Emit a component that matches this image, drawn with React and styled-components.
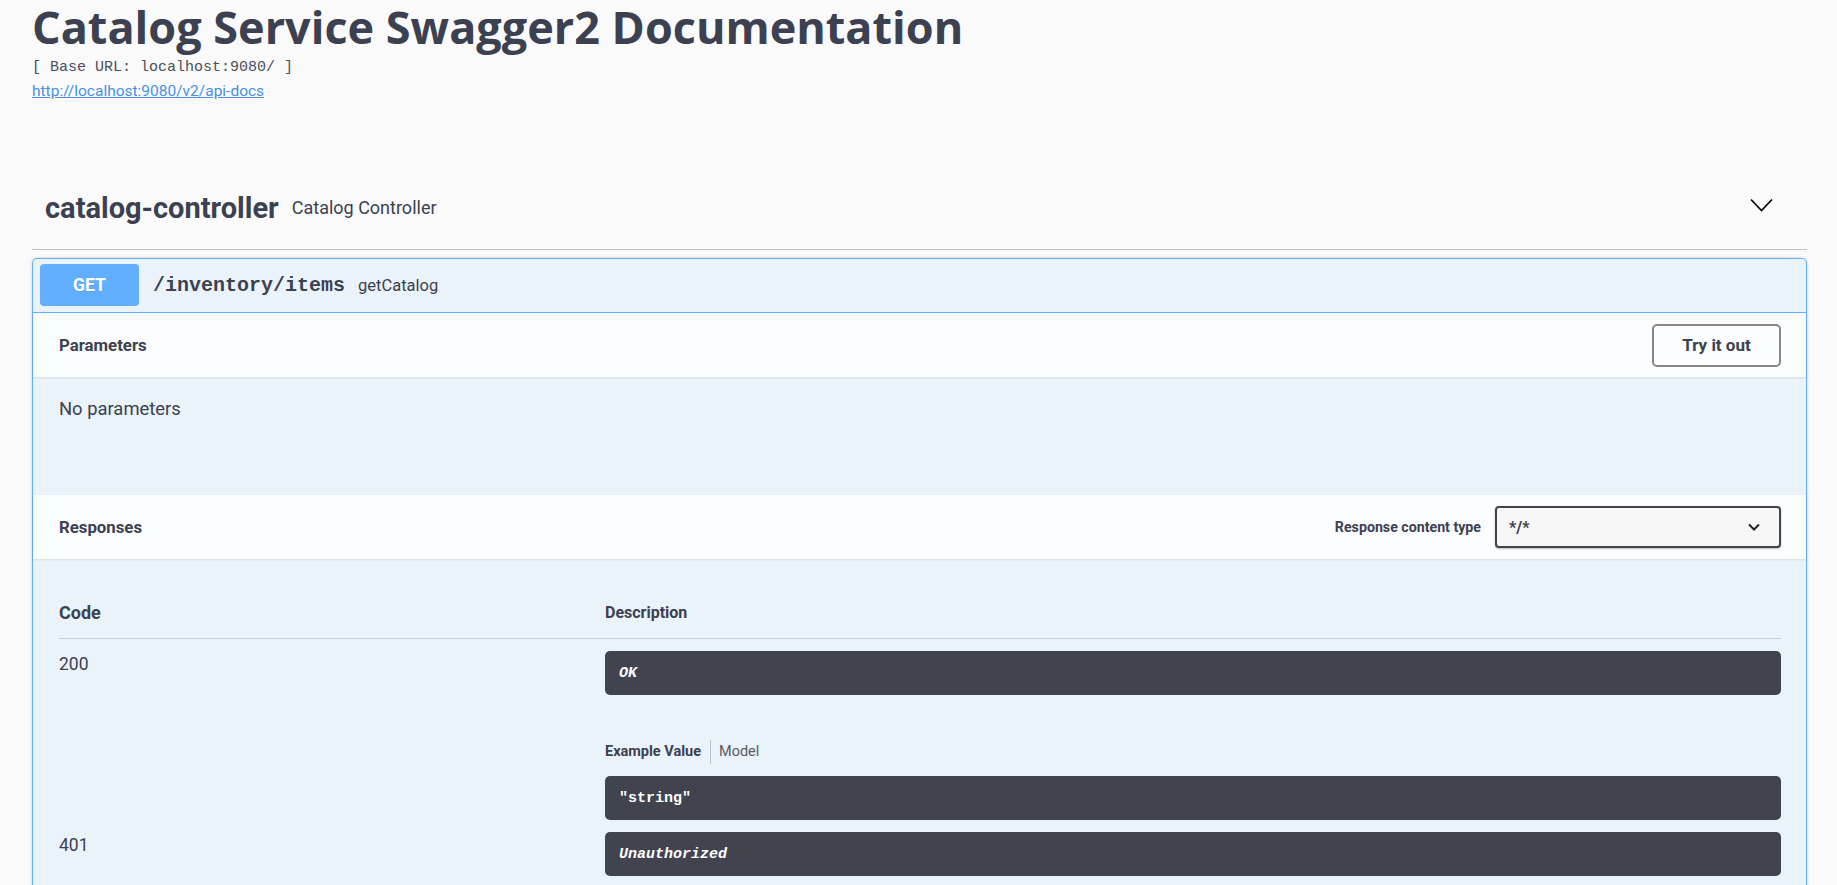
import React from 'react';
import styled, { createGlobalStyle } from 'styled-components';

const GlobalStyle = createGlobalStyle`
  body {
    margin: 0;
    background: #fafafa;
    font-family: Roboto, "Noto Sans", sans-serif;
    color: #3b4151;
  }
`;

const Wrapper = styled.div`
  padding: 0 30px 0 32px;
`;

const Info = styled.div`
  display: flex;
  flex-direction: column;
  align-items: flex-start;
`;

const Title = styled.h2`
  margin: 0;
  font-family: "Open Sans", sans-serif;
  font-weight: 700;
  font-size: 45px;
  line-height: 54px;
  color: #3b4151;
`;

const BaseUrl = styled.pre`
  margin: 5px 0 0;
  font-family: "Liberation Mono", monospace;
  font-size: 15px;
  line-height: 18px;
  font-weight: 400;
  color: #4a4f5c;
`;

const DocLink = styled.a`
  margin-top: 3px;
  font-size: 15.5px;
  line-height: 22px;
  color: #4990e2;
  text-decoration: underline;
`;

const TagHeader = styled.div`
  margin-top: 68px;
  height: 76px;
  display: flex;
  align-items: center;
  padding: 0 34px 3px 13px;
  border-bottom: 1px solid rgba(59, 65, 81, 0.3);
`;

const TagName = styled.span`
  font-weight: 700;
  font-size: 29px;
  line-height: 36px;
`;

const TagDesc = styled.small`
  margin-left: 13px;
  font-size: 18px;
  line-height: 22px;
  flex: 1;
`;

const Expand = styled.span`
  display: flex;
  margin-bottom: 6px;
`;

const OpBlock = styled.div`
  margin-top: 8px;
  border: 1px solid #61affe;
  border-radius: 5px;
  background: #ebf3fa;
  box-shadow: 0 0 3px rgba(0, 0, 0, 0.19);
`;

const OpHeader = styled.div`
  display: flex;
  align-items: center;
  padding: 5px 7px 6px;
  border-bottom: 1px solid #61affe;
`;

const Method = styled.span`
  width: 99px;
  height: 42px;
  border-radius: 4px;
  background: #61affe;
  color: #fff;
  font-weight: 700;
  font-size: 17.5px;
  display: flex;
  align-items: center;
  justify-content: center;
  text-shadow: 0 1px 0 rgba(0, 0, 0, 0.1);
`;

const Path = styled.span`
  margin-left: 14px;
  font-family: "Liberation Mono", monospace;
  font-weight: 700;
  font-size: 20px;
`;

const Summary = styled.span`
  margin-left: 13px;
  font-size: 16.5px;
`;

const SectionHeader = styled.div`
  height: 64px;
  display: flex;
  align-items: center;
  justify-content: space-between;
  padding: 0 25px 0 26px;
  background: rgba(255, 255, 255, 0.8);
  box-shadow: 0 1px 2px rgba(0, 0, 0, 0.1);
  position: relative;
`;

const SectionTitle = styled.h4`
  margin: 0;
  font-size: 16.8px;
  font-weight: 700;
`;

const TryButton = styled.button`
  width: 129px;
  height: 43px;
  border: 2.5px solid #888;
  border-radius: 5px;
  background: transparent;
  font-family: Roboto, sans-serif;
  font-weight: 700;
  font-size: 17px;
  color: #3b4151;
`;

const ParamBody = styled.div`
  height: 118px;
  box-sizing: border-box;
  padding: 21px 26px 20px;
  font-size: 18.4px;
  line-height: 22px;
`;

const ContentType = styled.label`
  display: flex;
  align-items: center;
  gap: 14px;
  font-weight: 700;
  font-size: 14.2px;
`;

const Select = styled.div`
  width: 286px;
  height: 42px;
  box-sizing: border-box;
  border: 2px solid #41444e;
  border-radius: 4px;
  background: #f7f7f7;
  box-shadow: 0 1px 2px rgba(0, 0, 0, 0.25);
  display: flex;
  align-items: center;
  justify-content: space-between;
  padding: 0 19px 0 12px;
  font-weight: 700;
  font-size: 16px;
`;

const ResponsesBody = styled.div`
  padding: 42px 25px 20px 26px;
`;

const Table = styled.div`
  display: grid;
  grid-template-columns: 546px 1fr;
`;

const HeadCell = styled.div`
  font-weight: 700;
  font-size: ${p => p.size}px;
  line-height: 24px;
  padding-bottom: 13px;
  border-bottom: 1px solid rgba(59, 65, 81, 0.2);
`;

const StatusCell = styled.div`
  padding-top: 14px;
  font-size: 17.5px;
  line-height: 22px;
`;

const DescCell = styled.div`
  padding-top: 12px;
  display: flex;
  flex-direction: column;
`;

const Dark = styled.div`
  height: 44px;
  box-sizing: border-box;
  background: #41444e;
  border-radius: 5px;
  display: flex;
  align-items: center;
  padding: 0 14px;
  font-family: "Liberation Mono", monospace;
  font-weight: 700;
  font-size: 15px;
  color: #fff;
  font-style: ${p => (p.italic ? 'italic' : 'normal')};
`;

const Tabs = styled.div`
  margin: 45px 0 12px;
  height: 24px;
  display: flex;
  align-items: center;
  font-size: 14.5px;
`;

const Tab = styled.span`
  font-weight: ${p => (p.active ? 700 : 400)};
  color: ${p => (p.active ? '#3b4151' : '#555a66')};
  padding: ${p => (p.active ? '0 9px 0 0' : '0 0 0 8px')};
  border-left: ${p => (p.active ? 'none' : '1px solid rgba(0,0,0,0.2)')};
  line-height: 24px;
`;

const Chevron = () => (
  <svg width="23" height="15" viewBox="0 0 23 15">
    <polyline points="1,1.5 11.5,12.5 22,1.5" fill="none" stroke="#000" strokeWidth="1.7" />
  </svg>
);

const SmallChevron = () => (
  <svg width="12" height="8" viewBox="0 0 12 8">
    <polyline points="1,1.5 6,6.5 11,1.5" fill="none" stroke="#222" strokeWidth="2" />
  </svg>
);

const App = () => (
  <>
    <GlobalStyle />
    <Wrapper>
      <Info>
        <Title>Catalog Service Swagger2 Documentation</Title>
        <BaseUrl>[ Base URL: localhost:9080/ ]</BaseUrl>
        <DocLink href="#">http://localhost:9080/v2/api-docs</DocLink>
      </Info>

      <TagHeader>
        <TagName>catalog-controller</TagName>
        <TagDesc>Catalog Controller</TagDesc>
        <Expand><Chevron /></Expand>
      </TagHeader>

      <OpBlock>
        <OpHeader>
          <Method>GET</Method>
          <Path>/inventory/items</Path>
          <Summary>getCatalog</Summary>
        </OpHeader>

        <SectionHeader>
          <SectionTitle>Parameters</SectionTitle>
          <TryButton>Try it out</TryButton>
        </SectionHeader>
        <ParamBody>No parameters</ParamBody>

        <SectionHeader>
          <SectionTitle>Responses</SectionTitle>
          <ContentType>
            Response content type
            <Select>
              <span>*/*</span>
              <SmallChevron />
            </Select>
          </ContentType>
        </SectionHeader>

        <ResponsesBody>
          <Table>
            <HeadCell size={18}>Code</HeadCell>
            <HeadCell size={16}>Description</HeadCell>

            <StatusCell>200</StatusCell>
            <DescCell>
              <Dark italic>OK</Dark>
              <Tabs>
                <Tab active>Example Value</Tab>
                <Tab>Model</Tab>
              </Tabs>
              <Dark>"string"</Dark>
            </DescCell>

            <StatusCell>401</StatusCell>
            <DescCell>
              <Dark italic>Unauthorized</Dark>
            </DescCell>
          </Table>
        </ResponsesBody>
      </OpBlock>
    </Wrapper>
  </>
);

export default App;
